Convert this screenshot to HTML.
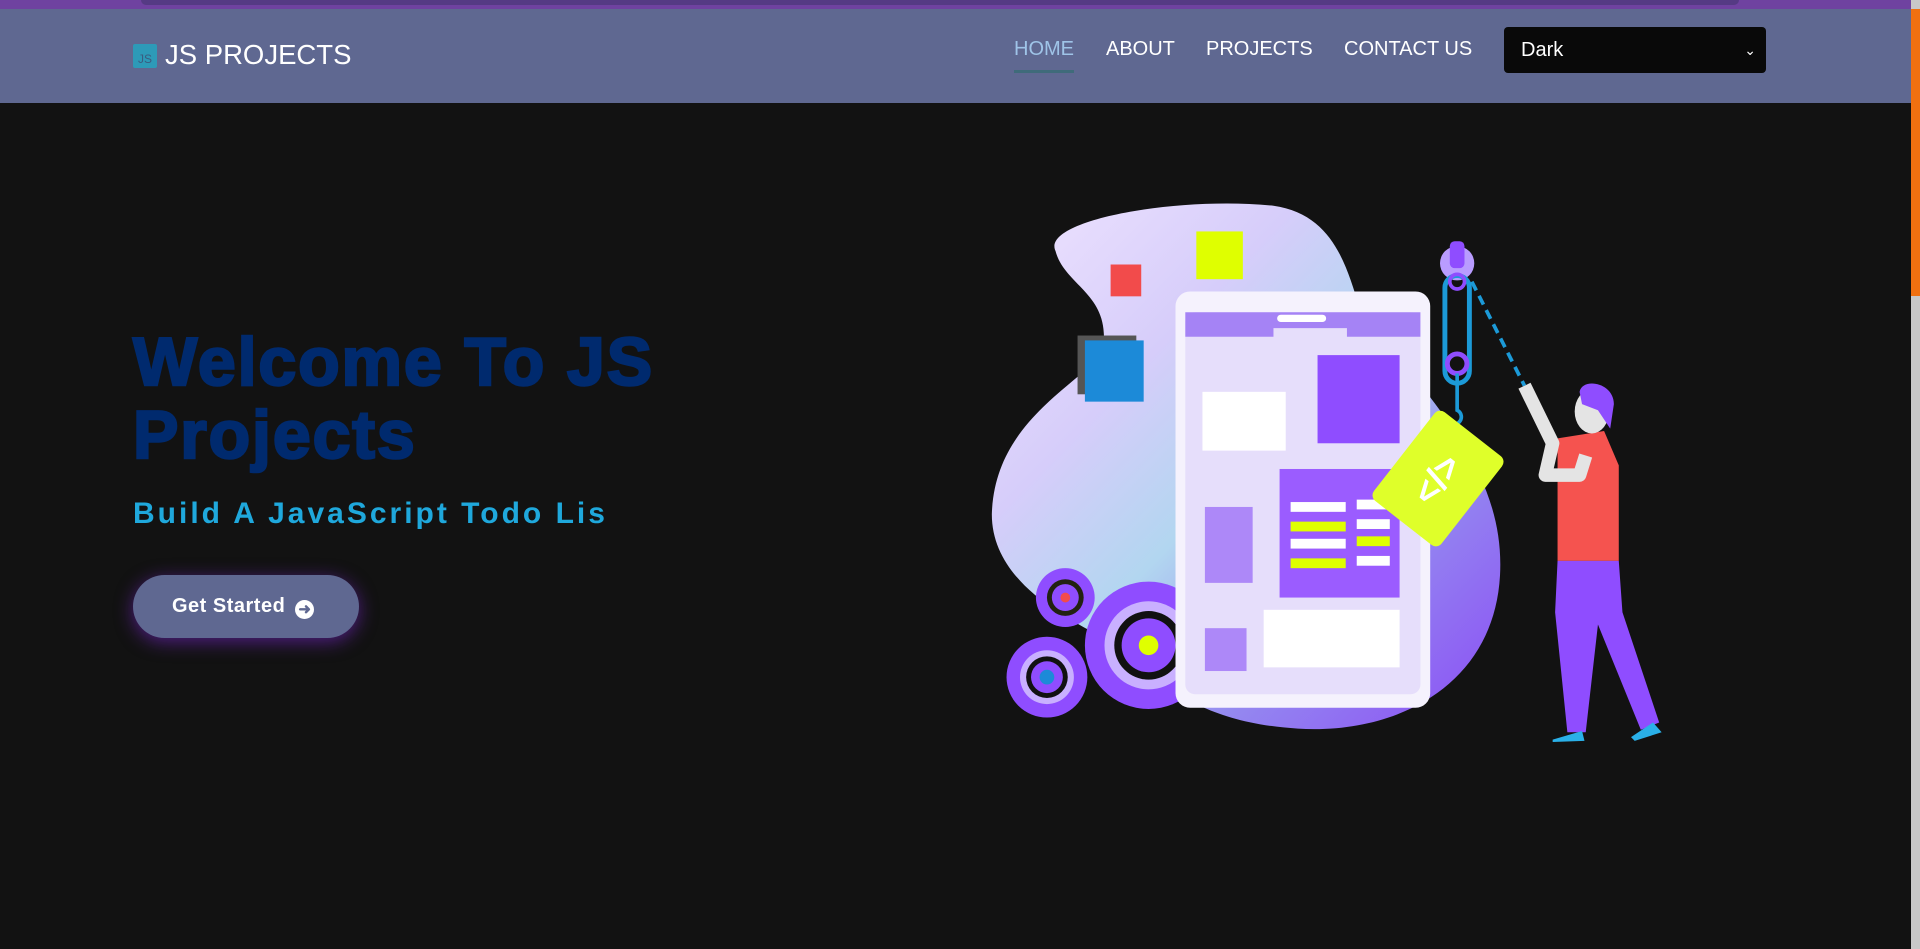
<!DOCTYPE html>
<html><head><meta charset="utf-8"><style>
*{margin:0;padding:0;box-sizing:border-box}
html,body{width:1920px;height:949px;overflow:hidden;background:#121212;font-family:"Liberation Sans",Arial,sans-serif}
.top{position:absolute;left:0;top:0;width:1911px;height:9px;background:#6f42a0}
.top i{position:absolute;left:141px;top:0;width:1598px;height:5px;background:#553a84;border-radius:0 0 6px 6px}
nav{position:absolute;left:0;top:9px;width:1911px;height:94px;background:#5f6891}
.logo{position:absolute;left:133px;top:35px;width:24px;height:24px;background:#2d9ab8;border-radius:2px;color:#3a5c80;font-size:12px;line-height:30px;text-align:center}
.brand{position:absolute;left:165px;top:30px;color:#fff;font-size:27.5px}
.nl{position:absolute;top:29px;color:#fff;font-size:20px}
.sel{position:absolute;left:1504px;top:18px;width:262px;height:46px;background:#090909;border-radius:4px;color:#fff;font-size:20px;line-height:46px;padding-left:17px}
.sel b{position:absolute;right:10px;top:0;font-weight:normal;font-size:14px}
.sb{position:absolute;right:0;top:0;width:9px;height:949px;background:#c8c8c8}
.sb i{position:absolute;left:0;top:9px;width:9px;height:287px;background:#f07010}
h1{position:absolute;left:133px;top:326px;color:#002a6e;font-size:68px;line-height:73px;font-weight:900;letter-spacing:1.9px;-webkit-text-stroke:2.5px #002a6e}
h2{position:absolute;left:133px;top:497px;color:#1fa8dc;font-size:30px;font-weight:bold;letter-spacing:3px}
.btn{position:absolute;left:133px;top:575px;width:226px;height:63px;border-radius:32px;background:#5f6891;box-shadow:0 4px 18px rgba(130,40,220,.55);color:#fff;font-weight:bold;font-size:20px;line-height:63px;padding-left:39px;letter-spacing:.5px}
.btn span{display:inline-block;width:19px;height:19px;border-radius:50%;background:#fff;color:#5f6891;font-size:15px;line-height:19px;text-align:center;vertical-align:-2px;margin-left:4px}
svg{position:absolute;left:0;top:0}
</style></head><body>
<div class="top"><i></i></div>
<nav>
<div class="logo">JS</div><div class="brand">JS PROJECTS</div>
<div class="nl" style="left:1014px;color:#9fc4e8">HOME</div>
<div style="position:absolute;left:1014px;top:61px;width:60px;height:3px;background:#3f6b7a"></div>
<div class="nl" style="left:1106px">ABOUT</div>
<div class="nl" style="left:1206px">PROJECTS</div>
<div class="nl" style="left:1344px">CONTACT US</div>
<div class="sel">Dark<b>&#8964;</b></div>
</nav>
<div class="sb"><i></i></div>
<h1>Welcome To JS<br>Projects</h1>
<h2>Build A JavaScript Todo Lis</h2>
<div class="btn">Get Started <span>&#10140;</span></div>
<svg width="1920" height="949" viewBox="0 0 1568 775">
<defs>
<linearGradient id="bl" x1="0" y1="0" x2="1" y2="1"><stop offset="0" stop-color="#efe4ff"/><stop offset=".3" stop-color="#d6cdfa"/><stop offset=".5" stop-color="#b2d6f0"/><stop offset=".72" stop-color="#9488f0"/><stop offset="1" stop-color="#8b4cf5"/></linearGradient>
</defs>
<path d="M862 205 C850 180 960 160 1040 168 C1090 175 1100 220 1110 250 C1160 320 1230 380 1225 470 C1220 560 1140 600 1060 595 C980 590 950 560 900 520 C860 500 810 470 810 420 C812 350 870 320 900 290 C910 240 870 235 862 205Z" fill="url(#bl)"/>
<rect x="880" y="274" width="48" height="48" fill="#555"/>
<rect x="886" y="278" width="48" height="50" fill="#1c8ad8"/>
<rect x="907" y="216" width="25" height="26" fill="#f24b4b"/>
<rect x="977" y="189" width="38" height="39" fill="#dfff00"/>
<g fill="#8f4dff">
<circle cx="870" cy="488" r="24"/><circle cx="855" cy="553" r="33"/><circle cx="938" cy="527" r="52"/>
</g>
<circle cx="870" cy="488" r="15" fill="#221"/><circle cx="870" cy="488" r="11" fill="#8f4dff"/><circle cx="870" cy="488" r="4" fill="#f24b4b"/>
<circle cx="855" cy="553" r="22" fill="#c9b0ff"/><circle cx="855" cy="553" r="17" fill="#111"/><circle cx="855" cy="553" r="13" fill="#8f4dff"/><circle cx="855" cy="553" r="6" fill="#1c8ad8"/>
<circle cx="938" cy="527" r="36" fill="#c9b0ff"/><circle cx="938" cy="527" r="28" fill="#111"/><circle cx="938" cy="527" r="22" fill="#8f4dff"/><circle cx="938" cy="527" r="8" fill="#dfff00"/>
<rect x="960" y="238" width="208" height="340" rx="12" fill="#f5f2fd"/>
<rect x="968" y="255" width="192" height="312" rx="8" fill="#e6defb"/>
<path d="M968 255 H1160 V275 H1100 V268 H1040 V275 H968Z" fill="#a583f5"/>
<rect x="1043" y="257" width="40" height="6" rx="3" fill="#fff"/>
<rect x="982" y="320" width="68" height="48" fill="#fff"/>
<rect x="1076" y="290" width="67" height="72" fill="#8f4dff"/>
<rect x="984" y="414" width="39" height="62" fill="#ad88f8"/>
<rect x="1045" y="383" width="98" height="105" fill="#9b5cff"/>
<g fill="#fff"><rect x="1054" y="410" width="45" height="8"/><rect x="1108" y="408" width="27" height="8"/><rect x="1108" y="424" width="27" height="8"/><rect x="1054" y="440" width="45" height="8"/><rect x="1108" y="454" width="27" height="8"/></g>
<g fill="#dfff00"><rect x="1054" y="426" width="45" height="8"/><rect x="1108" y="438" width="27" height="8"/><rect x="1054" y="456" width="45" height="8"/></g>
<rect x="984" y="513" width="34" height="35" fill="#ad88f8"/>
<rect x="1032" y="498" width="111" height="47" fill="#fff"/>
<circle cx="1190" cy="215" r="14" fill="#b99cff"/><rect x="1184" y="197" width="12" height="22" rx="4" fill="#8f4dff"/>
<rect x="1180" y="225" width="20" height="88" rx="10" fill="none" stroke="#1c9ad8" stroke-width="4"/>
<circle cx="1190" cy="230" r="6" fill="none" stroke="#8f4dff" stroke-width="3"/>
<circle cx="1190" cy="297" r="8" fill="none" stroke="#8f4dff" stroke-width="4"/>
<path d="M1190 305 V335 a6 6 0 1 1 -8 8" fill="none" stroke="#1c9ad8" stroke-width="3"/>
<line x1="1202" y1="230" x2="1245" y2="315" stroke="#1c9ad8" stroke-width="3" stroke-dasharray="8 5"/>
<g transform="rotate(38 1175 390)"><rect x="1140" y="345" width="70" height="92" rx="6" fill="#dfff2a"/><text x="1175" y="402" font-family="Liberation Sans" font-weight="bold" font-size="30" fill="#fff" text-anchor="middle" transform="rotate(-90 1175 392)">&lt;/&gt;</text></g>
<path d="M1272 358 L1310 352 L1322 380 L1322 458 L1272 458Z" fill="#f5534f"/>
<path d="M1245 315 L1268 362 L1262 388 L1290 388 L1295 372" fill="none" stroke="#e4e4e4" stroke-width="11" stroke-linejoin="round"/>
<path d="M1272 458 H1322 L1325 500 L1355 590 L1340 596 L1305 510 L1295 598 L1280 598 L1270 500Z" fill="#8f4dff"/>
<ellipse cx="1300" cy="336" rx="14" ry="18" fill="#e4e4e4"/>
<path d="M1290 320 C1292 308 1318 312 1318 330 L1315 350 L1305 335 L1292 330Z" fill="#8f4dff"/>
<path d="M1268 604 L1292 597 L1294 605 L1268 606Z M1332 602 L1350 590 L1357 598 L1335 605Z" fill="#2ab0e8"/>
</svg>
</body></html>
